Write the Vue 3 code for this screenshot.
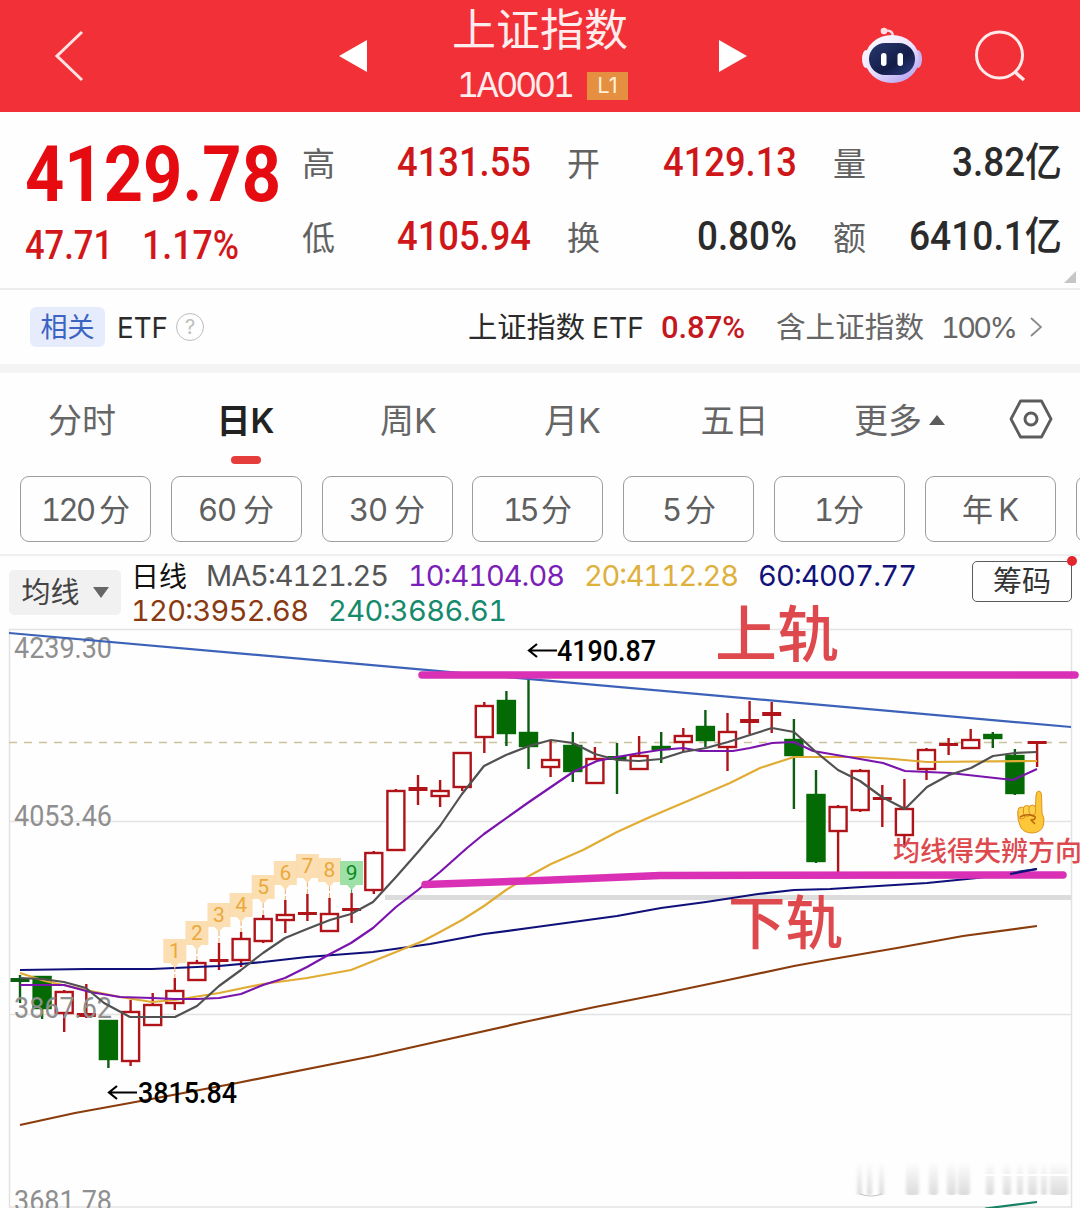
<template>
  <div class="page">
    <header class="header">
      <svg class="header__back" viewBox="0 0 30 54">
        <path d="M28 3 3 27 28 51" fill="none" stroke="#ffe3e3" stroke-width="3" />
      </svg>
      <svg class="header__arrow" viewBox="0 0 28 32"><path d="M0 16 28 0V32Z" fill="#fff" /></svg>
      <div class="header__title">
        <FitText class="cjk" text="上证指数" :w="176" :size="44" :h="61" :base="46" />
        <div class="header__code">
          <FitText class="inter" text="1A0001" :w="118" :size="34" :h="38" :base="30" loose />
          <span class="header__level">L1</span>
        </div>
      </div>
      <svg class="header__arrow" viewBox="0 0 28 32"><path d="M28 16 0 0V32Z" fill="#fff" /></svg>
      <svg class="header__robot" viewBox="0 0 62 58">
        <defs>
          <linearGradient id="shell" x1="0" y1="0" x2=".7" y2="1">
            <stop offset="0" stop-color="#fff" />
            <stop offset=".55" stop-color="#ece4ff" />
            <stop offset="1" stop-color="#b9a9f2" />
          </linearGradient>
          <linearGradient id="visor" x1="0" y1="0" x2="1" y2="1">
            <stop offset="0" stop-color="#27386f" />
            <stop offset=".6" stop-color="#141d48" />
            <stop offset="1" stop-color="#2e3f82" />
          </linearGradient>
        </defs>
        <path d="M23 5Q32 3 32 11" fill="none" stroke="#ffd9e0" stroke-width="2.4" />
        <circle cx="23" cy="5" r="3.3" fill="#ffdfe4" />
        <ellipse cx="5" cy="33" rx="4" ry="9" fill="#f6efff" />
        <ellipse cx="57" cy="33" rx="4" ry="9" fill="#c4b5f5" />
        <ellipse cx="31" cy="33" rx="27" ry="24" fill="url(#shell)" />
        <rect x="8" y="17" width="46" height="32" rx="16" fill="url(#visor)" />
        <rect x="20" y="27" width="5.5" height="13" rx="2.7" fill="#fff" />
        <rect x="36.5" y="27" width="5.5" height="13" rx="2.7" fill="#fff" />
      </svg>
      <svg class="header__search" viewBox="0 0 54 54">
        <circle cx="26.5" cy="26" r="23" fill="none" stroke="#ffe9e9" stroke-width="3" />
        <path d="M42 43 51 51" stroke="#ffe9e9" stroke-width="3.4" />
      </svg>
    </header>

    <section class="quote">
      <div class="quote__main">
        <FitText class="num num--bold" text="4129.78" :w="256" :size="78" :h="84" :base="75" />
        <div class="quote__change">
          <FitText class="num" text="47.71" :w="88" :size="40" :h="44" :base="35" />
          <FitText class="num" text="1.17%" :w="97" :size="40" :h="44" :base="35" />
        </div>
      </div>
      <div class="quote__grid">
        <template v-for="q in quotes" :key="q.label">
          <span class="quote__label">{{ q.label }}</span>
          <FitText
            class="num quote__value"
            :class="{ 'quote__value--up': q.up }"
            :text="q.value"
            :w="q.w"
            :size="40"
            :h="44"
            :base="35"
          />
        </template>
      </div>
      <i class="quote__corner"></i>
    </section>

    <section class="etf">
      <span class="etf__tag">相关</span>
      <FitText class="inter" text="ETF" :w="51" :size="29" :h="34" :base="28" />
      <span class="etf__help">?</span>
      <span class="etf__gap"></span>
      <FitText class="cjk" text="上证指数" :w="117" :size="29" :h="34" :base="28" />
      <FitText class="inter etf__etf" text="ETF" :w="52" :size="29" :h="34" :base="28" />
      <FitText class="num etf__rate" text="0.87%" :w="84" :size="31" :h="34" :base="28" loose />
      <FitText class="cjk etf__muted" text="含上证指数" :w="148" :size="29" :h="34" :base="28" />
      <FitText class="inter etf__muted etf__pct" text="100%" :w="77" :size="29" :h="34" :base="28" loose />
      <svg class="etf__more" viewBox="0 0 12 20">
        <path d="M1 1 11 10 1 19" fill="none" stroke="#888" stroke-width="1.8" />
      </svg>
    </section>

    <nav class="tabs">
      <span v-for="t in tabs" :key="t" class="tabs__item" :class="{ 'tabs__item--on': t === '日K' }">
        {{ t }}
      </span>
      <span class="tabs__item tabs__item--more">更多<i class="tabs__caret"></i></span>
      <svg class="tabs__setting" viewBox="0 0 44 40">
        <path d="M11.500 2H32.500L42 20 32.500 38H11.500L2 20Z" fill="none" stroke="#5c5c5c" stroke-width="2.800" stroke-linejoin="round" />
        <circle cx="22" cy="20" r="6" fill="none" stroke="#5c5c5c" stroke-width="3" />
      </svg>
    </nav>

    <div class="periods">
      <span v-for="p in periods" :key="p.text" class="periods__item">
        <FitText class="inter" :text="p.text" :w="p.w" :size="31" :h="36" :base="30" loose />
      </span>
      <span class="periods__item"></span>
    </div>

    <section class="ma">
      <span class="ma__select">均线<i class="ma__caret"></i></span>
      <div class="ma__list">
        <div class="ma__row">
          <span class="ma__name">日线</span>
          <FitText v-for="m in ma.slice(0, 4)" :key="m.text" class="inter" :fill="m.color" :text="m.text" :w="m.w" :size="29" :h="35" :base="28" loose />
        </div>
        <div class="ma__row">
          <FitText v-for="m in ma.slice(4)" :key="m.text" class="inter" :fill="m.color" :text="m.text" :w="m.w" :size="29" :h="35" :base="28" loose />
        </div>
      </div>
      <span class="ma__chip">筹码<i class="ma__dot"></i></span>
    </section>

    <svg class="chart" viewBox="0 629 1080 579" width="1080" height="579">
      <!-- frame and grid -->
      <g stroke="#e3e3e3" stroke-width="1.5" fill="none">
        <path d="M9.500 1208V629.500H1071.500V1208M9.500 821.500H1071M9.500 1014.500H1071M9.500 1207H1071" />
      </g>
      <path d="M9 742.500H1071" stroke="#c9c49b" stroke-width="1.400" stroke-dasharray="8 7" />
      <path d="M385 897.500H1071" stroke="#dcdcdc" stroke-width="5" />

      <!-- candles -->
      <g v-for="(c, i) in candles" :key="i" :stroke="c[0] ? '#b01318' : '#0b5e12'" stroke-width="2.400">
        <path v-if="c[1] < c[2]" :d="`M${cx(i)} ${c[1]}V${c[2]}`" />
        <path v-if="c[4] > c[3]" :d="`M${cx(i)} ${c[3]}V${c[4]}`" />
        <path v-if="c[3] - c[2] < 4" :d="`M${cx(i) - 9.500} ${(c[2] + c[3]) / 2}h19`" :stroke-width="c[3] - c[2] + 2" />
        <rect
          v-else
          :x="cx(i) - 8.500"
          :y="c[2] + 1"
          width="17"
          :height="c[3] - c[2] - 2"
          :fill="c[0] ? '#fff' : '#046b04'"
          :stroke="c[0] ? '#b01318' : '#046b04'"
        />
      </g>

      <!-- axis -->
      <g class="num num--mark" fill="#8f8f8f" font-size="29">
        <text v-for="a in axis" :key="a.text" x="14" :y="a.y" textLength="98" lengthAdjust="spacingAndGlyphs">{{ a.text }}</text>
      </g>

      <!-- moving averages -->
      <g fill="none" stroke-width="2.200" stroke-linejoin="round">
        <polyline v-for="l in lines" :key="l.color" :points="l.points" :stroke="l.color" />
      </g>
      <path d="M9 633 1071 727" stroke="#3b62b8" stroke-width="2.200" />

      <!-- nine-turn counters -->
      <g v-for="(y, n) in marks" :key="n" class="num num--mark">
        <path :d="`M${cx(n + 7)} ${y + 28}V${candles[n + 7][1]}`" :stroke="n === 8 ? '#2f9e3f' : '#edab6a'" stroke-dasharray="5 2" />
        <path
          :d="`M${cx(n + 7) - 11.500} ${y}h23v24h-7l-4.500 5-4.500-5h-7Z`"
          :fill="n === 8 ? '#8fdd9c' : '#fcdaa8'"
          fill-opacity=".88"
        />
        <text :x="cx(n + 7)" :y="y + 19" font-size="21" text-anchor="middle" :fill="n === 8 ? '#0d8a1d' : '#e9a93c'">{{ n + 1 }}</text>
      </g>

      <!-- high / low -->
      <g class="num num--extreme" font-size="29" fill="#000">
        <path d="M557 650.500H529M537 644 529 650.500 537 657M137 1092.500H109M117 1086 109 1092.500 117 1099" fill="none" stroke="#000" stroke-width="2.200" />
        <text x="557" y="661" textLength="99" lengthAdjust="spacingAndGlyphs">4190.87</text>
        <text x="138" y="1103" textLength="99" lengthAdjust="spacingAndGlyphs">3815.84</text>
      </g>

      <!-- hand-drawn channel -->
      <g fill="none" stroke="#d930b5" stroke-width="7.500" stroke-linecap="round" stroke-linejoin="round">
        <path d="M422 675H1075" />
        <path d="M425 884.500 540 880.500 660 875.500 1063 875" />
      </g>
      <path d="M1010 874 1037 869" stroke="#10107a" stroke-width="2.200" />
      <g class="cjk cjk--note" fill="#dd494d">
        <text x="715" y="657" font-size="61" textLength="124" lengthAdjust="spacingAndGlyphs">上轨</text>
        <text x="728" y="944" font-size="58" textLength="115" lengthAdjust="spacingAndGlyphs">下轨</text>
        <text class="cjk--tip" x="893" y="861" font-size="27" textLength="189" lengthAdjust="spacingAndGlyphs">均线得失辨方向</text>
      </g>

      <!-- pointing hand -->
      <g stroke="#d98a1c" stroke-width=".9" stroke-linejoin="round">
        <path d="M1035.500 807 1036 795Q1036.500 791 1039 791 1041.500 791.500 1041.500 795L1042 813Q1045 818 1043.500 825 1041 833 1032 833 1024 833 1020.500 827 1017 820 1018 811Z" fill="#fcc83a" />
        <rect x="1018" y="807" width="7" height="12" rx="3.500" fill="#fdd04a" />
        <rect x="1023.500" y="805.500" width="6.500" height="11" rx="3.200" fill="#fdd04a" />
        <rect x="1029" y="805" width="6.500" height="10" rx="3.200" fill="#fdd04a" />
        <path d="M1020 817Q1027 813 1035 816.500 1036 820 1031 820L1035 824" fill="none" stroke="#b8660f" stroke-width="1.500" />
      </g>

      <!-- faded watermark -->
      <defs>
        <linearGradient id="fade" x1="0" y1="0" x2="0" y2="1">
          <stop offset="0" stop-color="#999" stop-opacity="0" />
          <stop offset="1" stop-color="#999" stop-opacity=".34" />
        </linearGradient>
        <filter id="soft"><feGaussianBlur stdDeviation="1.6 .6" /></filter>
      </defs>
      <g filter="url(#soft)">
        <rect v-for="b in blobs" :key="b[0]" :x="b[0]" y="1162" :width="b[1]" height="33" rx="3" fill="url(#fade)" />
      </g>
      <path d="M860 1194Q871 1198 882 1194" fill="none" stroke="#c4c4c4" stroke-width="1.200" />
      <path d="M980 1175H1069" stroke="#fff" stroke-width="2" />
      <path d="M985 1208.500 1037 1202" stroke="#178065" stroke-width="2.200" />
    </svg>
  </div>
</template>

<script setup>
import { h } from "vue";

// text stretched to a fixed width, keeps digits condensed like the quote font
// loose: only the letter spacing is stretched
const FitText = (p) =>
  h("svg", { width: p.w, height: p.h, style: { overflow: "visible", flex: "none" } }, [
    h(
      "text",
      {
        x: 0,
        y: p.base,
        "font-size": p.size,
        fill: p.fill || "currentColor",
        textLength: p.w,
        lengthAdjust: p.loose !== undefined ? "spacing" : "spacingAndGlyphs",
      },
      p.text
    ),
  ]);
FitText.props = ["text", "w", "size", "h", "base", "fill", "loose"];

const quotes = [
  { label: "高", value: "4131.55", w: 134, up: true },
  { label: "开", value: "4129.13", w: 134, up: true },
  { label: "量", value: "3.82亿", w: 110 },
  { label: "低", value: "4105.94", w: 134, up: true },
  { label: "换", value: "0.80%", w: 100 },
  { label: "额", value: "6410.1亿", w: 153 },
];

const tabs = ["分时", "日K", "周K", "月K", "五日"];

const periods = [
  { text: "120 分", w: 89 },
  { text: "60 分", w: 76 },
  { text: "30 分", w: 76 },
  { text: "15 分", w: 69 },
  { text: "5 分", w: 54 },
  { text: "1 分", w: 50 },
  { text: "年 K", w: 57 },
];

const ma = [
  { text: "MA5:4121.25", w: 183, color: "#555" },
  { text: "10:4104.08", w: 157, color: "#7b1fb8" },
  { text: "20:4112.28", w: 155, color: "#deb03c" },
  { text: "60:4007.77", w: 159, color: "#12127a" },
  { text: "120:3952.68", w: 178, color: "#8a3a12" },
  { text: "240:3686.61", w: 179, color: "#168a6c" },
];

const axis = [
  { text: "4239.30", y: 658 },
  { text: "4053.46", y: 826 },
  { text: "3867.62", y: 1018 },
  { text: "3681.78", y: 1211 },
];

const cx = (i) => +(20 + 22.11 * i).toFixed(1);

// [up, high, body top, body bottom, low]
const candles = [
  [0, 975, 979, 981, 1003],
  [0, 976, 976, 1009, 1019],
  [1, 990, 991, 1014, 1032],
  [1, 984, 1014, 1016, 1018],
  [0, 1020, 1020, 1060, 1068],
  [1, 1000, 1011, 1062, 1066],
  [1, 993, 1004, 1026, 1026],
  [1, 978, 990, 1004, 1010],
  [1, 960, 962, 981, 981],
  [1, 943, 960, 961, 970],
  [1, 932, 938, 961, 967],
  [1, 915, 918, 942, 943],
  [1, 900, 914, 921, 933],
  [1, 894, 913, 914, 921],
  [1, 898, 913, 932, 932],
  [1, 893, 909, 910, 923],
  [1, 851, 852, 891, 894],
  [1, 789, 790, 851, 851],
  [1, 775, 788, 790, 805],
  [1, 780, 790, 797, 807],
  [1, 752, 752, 788, 791],
  [1, 702, 705, 738, 753],
  [0, 691, 700, 734, 746],
  [0, 680, 732, 747, 769],
  [1, 741, 759, 768, 777],
  [0, 732, 745, 772, 782],
  [1, 747, 758, 784, 784],
  [0, 743, 757, 759, 794],
  [1, 736, 755, 770, 770],
  [0, 732, 746, 750, 763],
  [1, 728, 735, 743, 752],
  [0, 710, 726, 741, 747],
  [1, 713, 731, 748, 771],
  [1, 701, 720, 722, 734],
  [1, 702, 713, 715, 733],
  [0, 719, 739, 756, 809],
  [0, 770, 794, 862, 863],
  [1, 805, 806, 832, 872],
  [1, 769, 770, 811, 812],
  [1, 785, 798, 799, 827],
  [1, 779, 808, 836, 845],
  [1, 748, 749, 770, 780],
  [1, 738, 744, 745, 755],
  [1, 729, 739, 749, 749],
  [0, 732, 734, 739, 748],
  [0, 749, 755, 794, 795],
  [1, 741, 742, 743, 767],
];

const lines = [
  {
    color: "#8a3c0c",
    points: "20,1125 75,1113 130,1103 237,1083 373,1056 440,1041 529,1021 595,1007 661,994 728,980 794,966 827,960 897,948 963,936 1037,926",
  },
  {
    color: "#10107a",
    points: "20,970 86,969 152,969 219,966 263,962 307,957 373,952 430,944 484,934 529,928 573,922 617,916 661,908 706,902 758,894 794,890 830,889 927,883 977,878 1037,869",
  },
  {
    color: "#e0ac33",
    points: "20,973 45,981 86,990 120,997 152,1002 175,1000 219,993 263,984 307,978 351,970 396,952 423,941 440,932 462,920 484,906 506,890 529,876 551,864 583,850 617,832 650,817 690,800 730,783 760,768 794,757 863,757 893,759 927,762 1037,761",
  },
  {
    color: "#7a14ad",
    points: "20,985 64,985 90,992 120,997 152,998 175,999 197,999 219,998 241,994 263,985 285,978 307,967 330,954 351,943 373,928 396,907 418,890 440,872 467,848 484,834 529,802 573,772 597,761 617,757 640,753 660,750 683,748 700,751 733,751 750,748 772,743 794,742 813,751 860,759 883,763 905,771 950,773 1013,780 1037,769",
  },
  {
    color: "#515151",
    points: "20,978 42,979 64,982 86,988 104,1003 130,1017 175,1017 197,1006 219,986 241,970 263,953 285,938 307,929 330,920 351,914 373,902 396,877 418,852 440,826 462,794 484,766 506,755 529,746 551,740 573,743 595,754 617,760 639,761 661,759 683,752 706,748 728,742 750,735 772,728 794,732 816,752 838,770 860,781 882,797 905,809 927,787 949,775 971,768 993,756 1015,753 1037,752",
  },
];

const marks = [939, 921, 903, 893, 875, 861, 854, 858, 861];

const blobs = [
  [857, 5], [867, 5], [879, 5], [906, 13], [929, 9], [947, 9], [958, 12],
  [986, 8], [1003, 8], [1017, 6], [1028, 9], [1041, 6], [1050, 18],
];
</script>

<style>
body {
  background: #fff;
}
</style>

<style scoped>
.page {
  width: 1080px;
  height: 1208px;
  overflow: hidden;
  background: #fefefe;
  color: #2b2b2b;
  font-family: Inter, "Noto Sans CJK SC", sans-serif;
}
.page svg {
  display: block;
  flex: none;
}
.num {
  font-family: Roboto, "Noto Sans CJK SC", sans-serif;
  font-weight: 500;
}
.num--bold {
  font-weight: 700;
}
.num--mark {
  font-weight: 400;
}
.cjk {
  font-family: "Noto Sans CJK SC", sans-serif;
}
.cjk--note {
  font-weight: 500;
}
.cjk--tip {
  font-weight: 500;
}
.inter {
  font-family: Inter, "Noto Sans CJK SC", sans-serif;
  font-variant-numeric: tabular-nums;
}

.header {
  display: flex;
  align-items: center;
  height: 112px;
  background: #f23038;
  color: #ffecec;
}
.header__back {
  width: 30px;
  height: 54px;
  margin-left: 54px;
}
.header__arrow {
  width: 28px;
  height: 32px;
  margin-left: 255px;
}
.header__title {
  align-self: flex-start;
  width: 176px;
  height: 112px;
  margin-left: 85px;
}
.header__title + .header__arrow {
  margin-left: 91px;
}
.header__code {
  display: flex;
  align-items: center;
  gap: 12px;
  margin: 6px 0 0 5px;
}
.header__level {
  width: 41px;
  height: 28px;
  background: #e58f41;
  color: #fff0d8;
  font-size: 22px;
  line-height: 27px;
  text-align: center;
}
.header__robot {
  width: 62px;
  height: 58px;
  margin-left: 114px;
  margin-bottom: 2px;
}
.header__search {
  width: 54px;
  height: 54px;
  margin-left: 50px;
}

.quote {
  position: relative;
  display: flex;
  height: 178px;
  border-bottom: 2px solid #ededed;
  box-sizing: border-box;
}
.quote__main {
  width: 276px;
  padding: 14px 0 0 25px;
  color: #e60b10;
}
.quote__change {
  display: flex;
  gap: 29px;
  margin-top: 14px;
  color: #d3161a;
}
.quote__grid {
  display: grid;
  grid-template-columns: 34px 196px 69px 197px 69px 196px;
  grid-template-rows: 44px 44px;
  row-gap: 30px;
  padding-top: 29px;
  height: 118px;
}
.quote__label {
  justify-self: end;
  color: #626262;
  font-size: 33px;
  line-height: 46px;
}
.quote__value {
  justify-self: end;
}
.quote__value--up {
  color: #cf1619;
}
.quote__corner {
  position: absolute;
  right: 4px;
  bottom: 5px;
  border-style: solid;
  border-width: 0 0 12px 12px;
  border-color: transparent transparent #c6c6c6;
}

.etf {
  display: flex;
  align-items: center;
  height: 83px;
  padding: 0 38px 0 30px;
  box-sizing: border-box;
  border-bottom: 9px solid #f4f4f4;
}
.etf__tag {
  width: 75px;
  height: 40px;
  margin-right: 12px;
  border-radius: 6px;
  background: #e6ecfb;
  color: #3a63c2;
  font-size: 27px;
  line-height: 41px;
  text-align: center;
}
.etf__help {
  width: 26px;
  height: 26px;
  margin-left: 8px;
  border: 1.5px solid #bdbdbd;
  border-radius: 50%;
  color: #bdbdbd;
  font-size: 20px;
  line-height: 26px;
  text-align: center;
}
.etf__gap {
  flex: 1;
}
.etf__etf {
  margin-left: 7px;
}
.etf__rate {
  margin-left: 17px;
  color: #c4181f;
}
.etf__muted {
  margin-left: 31px;
  color: #666;
}
.etf__pct {
  margin-left: 17px;
}
.etf__more {
  width: 12px;
  height: 20px;
  margin-left: 12px;
}

.tabs {
  display: grid;
  grid-template-columns: 164px 163px 163px 165px 159px 171px auto;
  align-items: center;
  height: 103px;
  padding-bottom: 11px;
  box-sizing: border-box;
}
.tabs__item {
  position: relative;
  top: 2px;
  color: #666;
  font-size: 34px;
  line-height: 50px;
  text-align: center;
}
.tabs__item--on {
  color: #222;
  font-weight: 600;
}
.tabs__item--on::after {
  content: "";
  position: absolute;
  left: calc(50% - 15px);
  top: 60px;
  width: 30px;
  height: 8px;
  border-radius: 4px;
  background: #e53c3c;
}
.tabs__item--more {
  display: flex;
  align-items: center;
  justify-content: center;
  gap: 7px;
}
.tabs__caret {
  margin-top: -3px;
  border: solid transparent;
  border-width: 0 8px 10px;
  border-bottom-color: #5c5c5c;
}
.tabs__setting {
  width: 44px;
  height: 40px;
  margin-left: 24px;
}

.periods {
  display: flex;
  gap: 19.8px;
  height: 80px;
  padding-left: 20px;
  box-sizing: border-box;
  border-bottom: 2px solid #efefef;
  overflow: hidden;
}
.periods__item {
  display: flex;
  align-items: center;
  justify-content: center;
  flex: none;
  width: 131px;
  height: 66px;
  box-sizing: border-box;
  border: 1.5px solid #9d9d9d;
  border-radius: 9px;
  color: #606060;
}

.ma {
  display: flex;
  height: 73px;
  padding-left: 9px;
}
.ma__select {
  display: flex;
  align-items: center;
  justify-content: center;
  gap: 13px;
  width: 112px;
  height: 45px;
  margin-top: 14px;
  border-radius: 5px;
  background: #f1f1f1;
  color: #444;
  font-size: 29px;
  line-height: 40px;
}
.ma__caret {
  border: solid transparent;
  border-width: 11px 8px 0;
  border-top-color: #666;
}
.ma__list {
  width: 841px;
  padding: 2px 0 0 10px;
}
.ma__row {
  display: flex;
  gap: 19px;
  height: 35px;
}
.ma__name {
  flex: none;
  width: 56px;
  color: #111;
  font-size: 28px;
  line-height: 38px;
  white-space: nowrap;
}
.ma__chip {
  position: relative;
  width: 100px;
  height: 41px;
  margin-top: 5px;
  box-sizing: border-box;
  border: 1.5px solid #5a5a5a;
  border-radius: 5px;
  color: #333;
  font-size: 29px;
  line-height: 40px;
  text-align: center;
}
.ma__dot {
  position: absolute;
  top: -6px;
  right: -6px;
  width: 10px;
  height: 10px;
  border-radius: 50%;
  background: #e3262e;
}

.chart {
  overflow: visible;
}
</style>
